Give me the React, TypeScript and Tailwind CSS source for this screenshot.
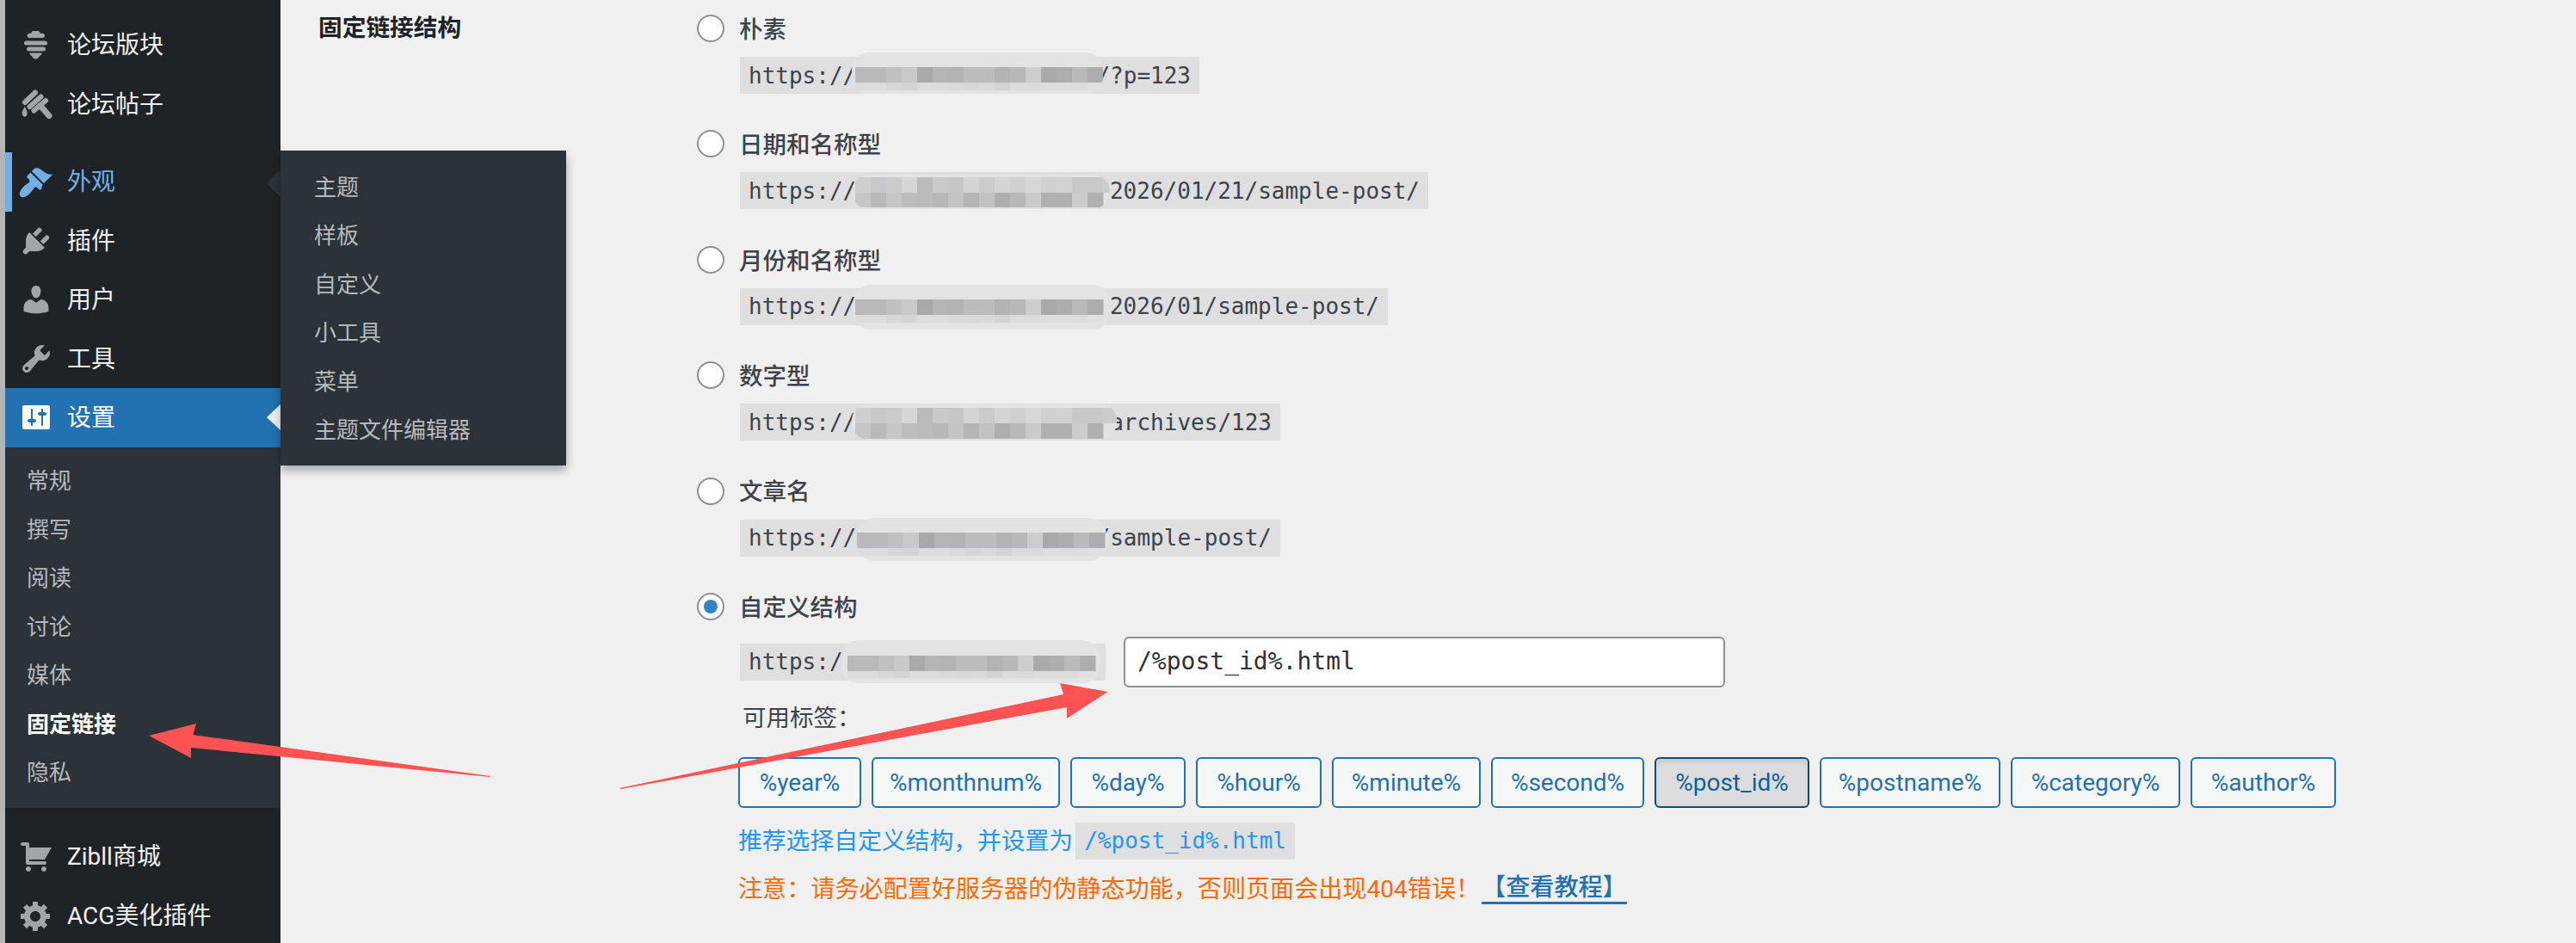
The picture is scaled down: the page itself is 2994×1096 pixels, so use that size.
const DASH = {
  appearance:
    "M14.48 11.06L7.41 3.99l1.5-1.5c.5-.56 2.3-.47 3.51.32 1.21.8 1.43 1.28 2.91 2.1 1.18.64 2.45 1.26 4.45.85zm-.71.71L6.7 4.7 4.93 6.47c-.39.39-.39 1.02 0 1.41l1.06 1.06c.39.39.39 1.03 0 1.42-.6.6-1.43 1.11-2.21 1.69-.35.26-.7.53-1.01.84-1.43 1.43-2.4 3.19-2.4 4.4 0 1.2.9 1.8 1.8 1.8 1.21 0 2.97-.97 4.4-2.4.31-.31.58-.66.84-1.01.58-.78 1.09-1.61 1.69-2.21.39-.39 1.03-.39 1.42 0l1.06 1.06c.39.39 1.02.39 1.41 0z",
  plugins:
    "M13.11 4.36L9.87 7.6 8 5.73l3.24-3.24c.35-.34 1.05-.2 1.56.32.52.51.66 1.21.31 1.55zm-8 1.77l.91-1.12 9.01 9.01-1.19.84c-.71.71-2.63 1.16-3.82 1.16H6.14L4.9 17.26c-.59.59-1.54.59-2.12 0-.59-.58-.59-1.53 0-2.12l1.24-1.24v-3.88c0-1.13.4-3.19 1.09-3.89zm7.26 3.97l3.24-3.24c.34-.35 1.04-.21 1.55.31.52.51.66 1.21.31 1.55l-3.24 3.25z",
  users:
    "M10 9.25c-2.27 0-2.73-3.44-2.73-3.44C7 4.02 7.82 2 9.97 2c2.16 0 2.98 2.02 2.71 3.81 0 0-.41 3.44-2.68 3.44zm0 2.57L12.72 10c2.39 0 4.52 2.33 4.52 4.53v2.49s-3.65 1.13-7.24 1.13c-3.65 0-7.24-1.13-7.24-1.13v-2.49c0-2.25 1.94-4.48 4.47-4.48z",
  tools:
    "M16.68 9.77c-1.34 1.34-3.3 1.67-4.95.99l-5.41 6.52c-.99.99-2.59.99-3.58 0s-.99-2.59 0-3.57l6.52-5.42c-.68-1.65-.35-3.61.99-4.95 1.28-1.28 3.12-1.62 4.72-1.06l-2.89 2.89 2.82 2.82 2.86-2.87c.53 1.58.18 3.39-1.08 4.65zM3.81 16.21c.4.39 1.04.39 1.43 0 .4-.4.4-1.04 0-1.43-.39-.4-1.03-.4-1.43 0-.39.39-.39 1.03 0 1.43z",
  settings:
    "M18 16V4c0-.55-.45-1-1-1H3c-.55 0-1 .45-1 1v12c0 .55.45 1 1 1h14c.55 0 1-.45 1-1zM8 11h1c.55 0 1 .45 1 1s-.45 1-1 1H8v1.5c0 .28-.22.5-.5.5s-.5-.22-.5-.5V13H6c-.55 0-1-.45-1-1s.45-1 1-1h1V5.5c0-.28.22-.5.5-.5s.5.22.5.5V11zm5-2h-1c-.55 0-1-.45-1-1s.45-1 1-1h1V5.5c0-.28.22-.5.5-.5s.5.22.5.5V7h1c.55 0 1 .45 1 1s-.45 1-1 1h-1v5.5c0 .28-.22.5-.5.5s-.5-.22-.5-.5V9z",
  cart:
    "M6 13h9c.55 0 1 .45 1 1s-.45 1-1 1H5c-.55 0-1-.45-1-1V4H2c-.55 0-1-.45-1-1s.45-1 1-1h3c.55 0 1 .45 1 1v2h13l-4 7H6v1zm-.5 3c.83 0 1.5.67 1.5 1.5S6.33 19 5.5 19 4 18.33 4 17.5 4.67 16 5.5 16zm9 0c.83 0 1.5.67 1.5 1.5s-.67 1.5-1.5 1.5-1.5-.67-1.5-1.5.67-1.5 1.5-1.5z",
  generic:
    "M18 12h-2.18c-.17.7-.44 1.35-.81 1.93l1.54 1.54-2.1 2.1-1.54-1.54c-.58.36-1.23.63-1.91.79V19H8v-2.18c-.68-.16-1.33-.43-1.91-.79l-1.54 1.54-2.12-2.12 1.54-1.54c-.36-.58-.63-1.23-.79-1.91H1V9.03h2.17c.16-.7.44-1.35.8-1.94L2.43 5.55l2.1-2.1 1.54 1.54c.58-.37 1.24-.64 1.93-.81V2h3v2.18c.68.16 1.33.43 1.91.79l1.54-1.54 2.12 2.12-1.54 1.54c.36.59.64 1.24.8 1.94H18V12zm-8.5 1.5c1.66 0 3-1.34 3-3s-1.34-3-3-3-3 1.34-3 3 1.34 3 3 3z",
};

function DashIcon({ d, color = "#a0a5aa" }: { d: string; color?: string }) {
  return (
    <svg viewBox="0 0 20 20" className="h-[40px] w-[40px] shrink-0" fill={color}>
      <path d={d} />
    </svg>
  );
}

function ForumsIcon() {
  return (
    <svg viewBox="0 0 40 40" className="h-[40px] w-[40px] shrink-0" fill="#a0a5aa">
      <path d="M17 4h5c1.6 0 2.6 1.2 2.6 2.8h2.6c1.6 0 2.8 1.1 2.8 2.6S29 12 27.5 12h-15C10.8 12 9.6 10.9 9.6 9.4s1.2-2.6 2.8-2.6h2C14.4 5.200 15.400 4 17 4z" />
      <rect x="6" y="15.500" width="27" height="5" rx="2.500" />
      <rect x="9" y="22.500" width="22" height="5" rx="2.500" />
      <path d="M13 29.500h13c.8 0 1 1 .4 1.500l-3.400 3.500c-.8 1.700-2.200 2-3.500 2s-2.700-.3-3.500-2l-3.300-3.500c-.600-.5-.500-1.500.300-1.500z" />
    </svg>
  );
}

function TopicsIcon() {
  return (
    <svg viewBox="0 0 40 40" className="h-[40px] w-[40px] shrink-0" fill="none" stroke="#a0a5aa" strokeLinecap="round">
      <path d="M7 18 19 6.500" strokeWidth="6" />
      <path d="M12.500 23 25.500 11.500" strokeWidth="6" />
      <path d="M17.500 27.500 31 16" strokeWidth="6" />
      <path d="M25 22 35 33.500" strokeWidth="7" />
      <path d="M6.700 23c-1.600 3-3 5-3 7.500 0 2.500 1.400 4.300 3 4.300s3-1.800 3-4.300c0-2.500-1.400-4.500-3-7.500z" fill="#a0a5aa" stroke="none" />
    </svg>
  );
}

function MenuRow({
  icon,
  label,
  tone = "text-[#f0f0f1]",
  className = "",
  children,
}: {
  icon: React.ReactNode;
  label: string;
  tone?: string;
  className?: string;
  children?: React.ReactNode;
}) {
  return (
    <div className={`relative flex h-[68.500px] items-center gap-[16px] pl-[16px] text-[28px] leading-none ${tone} ${className}`}>
      {icon}
      <span className="pt-[2px]">{label}</span>
      {children}
    </div>
  );
}

function Sidebar() {
  const subItems = ["常规", "撰写", "阅读", "讨论", "媒体", "固定链接", "隐私"];
  return (
    <aside className="relative h-full w-[320px] shrink-0 bg-[#1d2327] pt-[18px]">
      <MenuRow icon={<ForumsIcon />} label="论坛版块" />
      <MenuRow icon={<TopicsIcon />} label="论坛帖子" />
      <div className="h-[22px]" />
      <MenuRow
        icon={<DashIcon d={DASH.appearance} color="#72aee6" />}
        label="外观"
        tone="text-[#72aee6]"
      >
        <span className="absolute left-0 top-0 h-full w-[8px] bg-[#72aee6]" />
        <span className="absolute right-0 top-[20px] h-0 w-0 border-y-[16px] border-r-[16px] border-y-transparent border-r-[#2c3338]" />
      </MenuRow>
      <MenuRow icon={<DashIcon d={DASH.plugins} />} label="插件" />
      <MenuRow icon={<DashIcon d={DASH.users} />} label="用户" />
      <MenuRow icon={<DashIcon d={DASH.tools} />} label="工具" />
      <MenuRow
        icon={<DashIcon d={DASH.settings} color="#ffffff" />}
        label="设置"
        tone="text-white"
        className="bg-[#2271b1]"
      >
        <span className="absolute right-0 top-[19px] h-0 w-0 border-y-[15px] border-r-[16px] border-y-transparent border-r-[#f0f0f1]" />
      </MenuRow>
      <ul className="bg-[#2c3338] py-[12px]">
        {subItems.map((item) => (
          <li
            key={item}
            className={
              item === "固定链接"
                ? "flex h-[56.500px] items-center pl-[25px] text-[26px] font-bold text-white"
                : "flex h-[56.500px] items-center pl-[25px] text-[26px] text-[#b5b9bd]"
            }
          >
            {item}
          </li>
        ))}
      </ul>
      <div className="h-[22px]" />
      <MenuRow icon={<DashIcon d={DASH.cart} />} label="Zibll商城" />
      <MenuRow icon={<DashIcon d={DASH.generic} />} label="ACG美化插件" />
    </aside>
  );
}

function Flyout() {
  const items = ["主题", "样板", "自定义", "小工具", "菜单", "主题文件编辑器"];
  return (
    <ul className="absolute left-[326px] top-[175px] z-10 h-[366px] w-[332px] bg-[#2c3338] pt-[15px] shadow-[0_6px_10px_rgba(0,0,0,0.3)]">
      {items.map((item) => (
        <li key={item} className="flex h-[56.500px] items-center pl-[39px] text-[26px] text-[#b5b9bd]">
          {item}
        </li>
      ))}
    </ul>
  );
}

// pixelated redaction over the domain part of a url
function Mosaic({
  left,
  top,
  width,
  height,
  cellsLeft,
  rows,
}: {
  left: number;
  top: number;
  width: number;
  height: number;
  cellsLeft: number;
  rows: { y: number; h: number; c: string[] }[];
}) {
  return (
    <svg
      className="pointer-events-none absolute overflow-visible"
      style={{ left, top }}
      width={width}
      height={height}
    >
      <defs>
        <clipPath id={`clip-${left}-${top}-${width}`}>
          <rect width={width} height={height} rx="20" />
        </clipPath>
      </defs>
      <g clipPath={`url(#clip-${left}-${top}-${width})`}>
        <rect width={width} height={height} fill="#e3e3e4" />
        {rows.map((row) =>
          row.c.map((color, i) => (
            <rect key={`${row.y}-${i}`} x={cellsLeft + i * 18} y={row.y} width="18.500" height={row.h} fill={color} />
          )),
        )}
      </g>
    </svg>
  );
}

const darkRow = ["#b9b9bb", "#b9b9bb", "#c0c0c2", "#c9c9cb", "#a9a9ac", "#b4b4b6", "#b3b3b5", "#bcbcbe", "#bcbcbe", "#b3b3b5", "#b8b8ba", "#cdcdcf", "#a9a9ac", "#adadaf", "#b9b9bb", "#adadaf"];
const paleRow = ["#dcdcdd", "#dcdcdd", "#d7d7d8", "#d4d4d5", "#dcdcdd", "#dcdcdd", "#d9d9da", "#d7d7d8", "#d9d9da", "#d3d3d4", "#dbdbdc", "#dadadb", "#dddddd", "#dddddd", "#dcdcdd", "#e0e0e0"];
const midTop = ["#cfcfd0", "#c8c8ca", "#cbcbcc", "#d6d6d7", "#bbbbbd", "#c9c9cb", "#c6c6c8", "#d4d4d5", "#cbcbcc", "#d4d4d5", "#d0d0d1", "#d7d7d8", "#d0d0d1", "#d2d2d3", "#c8c8ca", "#c8c8ca", "#cccccd"];
const midBottom = ["#c6c6c8", "#b9b9bb", "#c6c6c8", "#bdbdbf", "#bbbbbd", "#b8b8ba", "#c4c4c6", "#b5b5b7", "#c2c2c4", "#aeaeb1", "#b8b8ba", "#cacacc", "#b0b0b3", "#b0b0b3", "#cccccd", "#b0b0b3"];

const urls: {
  label: string;
  suffix: string;
  widthClass: string;
  mosaic: { left: number; top: number; width: number; height: number; cellsLeft: number; rows: { y: number; h: number; c: string[] }[] };
}[] = [
  {
    label: "朴素",
    suffix: "/?p=123",
    widthClass: "w-[534px]",
    mosaic: { left: 130, top: -5, width: 292, height: 48, cellsLeft: 4, rows: [{ y: 17, h: 18, c: darkRow }, { y: 35, h: 9, c: paleRow }] },
  },
  {
    label: "日期和名称型",
    suffix: "2026/01/21/sample-post/",
    widthClass: "w-[800px]",
    mosaic: { left: 130, top: 3, width: 300, height: 40, cellsLeft: 4, rows: [{ y: 3, h: 18, c: midTop }, { y: 21, h: 17, c: midBottom }] },
  },
  {
    label: "月份和名称型",
    suffix: "2026/01/sample-post/",
    widthClass: "w-[753px]",
    mosaic: { left: 132, top: -4, width: 298, height: 52, cellsLeft: 2, rows: [{ y: 17, h: 18, c: darkRow }, { y: 35, h: 9, c: paleRow }] },
  },
  {
    label: "数字型",
    suffix: "/archives/123",
    widthClass: "w-[628px]",
    mosaic: { left: 130, top: 0, width: 308, height: 42, cellsLeft: 4, rows: [{ y: 5, h: 18, c: midTop }, { y: 23, h: 18, c: midBottom }] },
  },
  {
    label: "文章名",
    suffix: "/sample-post/",
    widthClass: "w-[628px]",
    mosaic: { left: 136, top: -2, width: 290, height: 50, cellsLeft: 0, rows: [{ y: 17, h: 18, c: darkRow }, { y: 35, h: 9, c: paleRow }] },
  },
];

const codeBox = "relative flex h-[43px] items-center justify-between bg-[#dfdfe0] px-[10px] font-['DejaVu_Sans_Mono',monospace] text-[26px] leading-none text-[#3c434a]";

function Radio({ checked = false, label }: { checked?: boolean; label: string }) {
  return (
    <div className="flex h-[32px] items-center gap-[17px]">
      <span className="flex h-[32px] w-[32px] items-center justify-center rounded-full border-2 border-[#8c8f94] bg-white">
        {checked && <span className="h-[16px] w-[16px] rounded-full bg-[#3582c4]" />}
      </span>
      <span className="pt-[3px] text-[27.500px] font-medium leading-none text-[#3c434a]">{label}</span>
    </div>
  );
}

const tags = [
  { text: "%year%", cls: "w-[143px]" },
  { text: "%monthnum%", cls: "w-[219px]" },
  { text: "%day%", cls: "w-[134px]" },
  { text: "%hour%", cls: "w-[146px]" },
  { text: "%minute%", cls: "w-[173px]" },
  { text: "%second%", cls: "w-[178px]" },
  { text: "%post_id%", cls: "w-[180px]", active: true },
  { text: "%postname%", cls: "w-[210px]" },
  { text: "%category%", cls: "w-[197px]" },
  { text: "%author%", cls: "w-[169px]" },
];

function TagButton({ text, cls, active }: { text: string; cls: string; active?: boolean }) {
  return (
    <button
      className={
        active
          ? `flex h-[59px] items-center justify-center rounded-[6px] border-2 border-[#0a4b78] bg-[#dcdcde] pt-[2px] text-[28px] text-[#135e96] shadow-[inset_0_4px_5px_rgba(0,0,0,0.08)] ${cls}`
          : `flex h-[59px] items-center justify-center rounded-[6px] border-2 border-[#2271b1] bg-[#f6f7f7] pt-[2px] text-[28px] text-[#2271b1] ${cls}`
      }
    >
      {text}
    </button>
  );
}

function Arrows() {
  return (
    <svg className="pointer-events-none absolute left-0 top-0 z-20" width="2994" height="1096" fill="#ff5252">
      <polygon points="173,855 228,841 224.500,854 570,902 569,903 222,869 222,881" />
      <polygon points="1287.500,804 1232,794 1236,807 720,916 722,917 1240,822 1240,835" />
    </svg>
  );
}

export default function App() {
  return (
    <div className="relative flex h-[1096px] w-[2994px] overflow-hidden bg-[#f0f0f1] font-['Roboto','Noto_Sans_CJK_SC',sans-serif]">
      <div className="h-full w-[6px] shrink-0 bg-[#b4b4b4]" />
      <Sidebar />
      <Flyout />
      <main className="flex flex-1 pt-[17px]">
        <div className="w-[484px] shrink-0 pl-[44px] pt-[1px] text-[27.700px] font-bold leading-[30px] text-[#1d2327]">
          固定链接结构
        </div>
        <div className="flex-1">
          {urls.map((u) => (
            <div key={u.label} className="h-[134.400px]">
              <Radio label={u.label} />
              <div className={`${codeBox} ml-[50px] mt-[17px] ${u.widthClass}`}>
                <span>https://</span>
                <span>{u.suffix}</span>
                <Mosaic {...u.mosaic} />
              </div>
            </div>
          ))}
          <Radio checked label="自定义结构" />
          <div className="ml-[50px] mt-[19px] flex h-[59px] items-center gap-[21px]">
            <div className={`${codeBox} w-[425px]`}>
              <span>https://</span>
              <Mosaic
                left={118}
                top={-4}
                width={300}
                height={50}
                cellsLeft={7}
                rows={[{ y: 18, h: 18, c: darkRow }, { y: 36, h: 8, c: paleRow }]}
              />
            </div>
            <div className="flex h-[59px] w-[699px] items-center rounded-[6px] border-2 border-[#8c8f94] bg-white pl-[14px] font-['DejaVu_Sans_Mono',monospace] text-[28px] text-[#2c3338]">
              /%post_id%.html
            </div>
          </div>
          <div className="ml-[48px] mt-[16px] flex h-[40px] items-center pl-[5px] text-[27.500px] leading-none text-[#3c434a]">
            可用标签：
          </div>
          <div className="ml-[48px] mt-[25px] flex gap-[12px]">
            {tags.map((t) => (
              <TagButton key={t.text} {...t} />
            ))}
          </div>
          <div className="ml-[48px] mt-[17px] flex h-[43px] items-center text-[27.800px] leading-none text-[#2196f3]">
            <span>推荐选择自定义结构，并设置为</span>
            <code className="ml-[3px] flex h-[43px] items-center bg-[#dfdfe0] px-[10px] font-['DejaVu_Sans_Mono',monospace] text-[26px]">
              /%post_id%.html
            </code>
          </div>
          <div className="ml-[48px] mt-[13px] flex h-[44px] items-center text-[28.100px] leading-none text-[#ff6a00]">
            <span>注意：请务必配置好服务器的伪静态功能，否则页面会出现404错误！</span>
            <a className="ml-[2px] border-b-[3px] border-[#2271b1] font-medium leading-[32px] text-[#2271b1]">【查看教程】</a>
          </div>
        </div>
      </main>
      <Arrows />
    </div>
  );
}
